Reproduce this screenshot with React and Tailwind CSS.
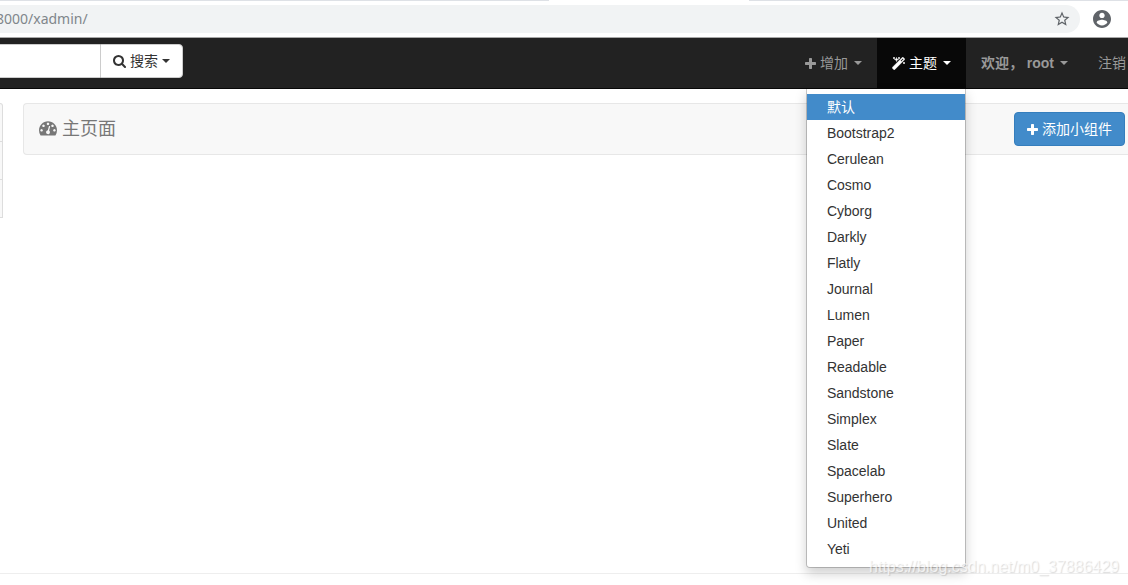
import { useState } from 'react'

const themes = [
    '默认', 'Bootstrap2', 'Cerulean', 'Cosmo', 'Cyborg', 'Darkly', 'Flatly', 'Journal', 'Lumen',
    'Paper', 'Readable', 'Sandstone', 'Simplex', 'Slate', 'Spacelab', 'Superhero', 'United', 'Yeti'
]

const iconPaths = {
    plus: 'M1600 736v192q0 40-28 68t-68 28h-416v416q0 40-28 68t-68 28h-192q-40 0-68-28t-28-68v-416h-416q-40 0-68-28t-28-68v-192q0-40 28-68t68-28h416v-416q0-40 28-68t68-28h192q40 0 68 28t28 68v416h416q40 0 68 28t28 68z',
    search: 'M1216 832q0-185-131.5-316.5t-316.5-131.5-316.5 131.5-131.5 316.5 131.5 316.5 316.5 131.5 316.5-131.5 131.5-316.5zm512 832q0 52-38 90t-90 38q-54 0-90-38l-343-342q-179 124-399 124-143 0-273.5-55.5t-225-150-150-225-55.5-273.5 55.5-273.5 150-225 225-150 273.5-55.5 273.5 55.5 225 150 150 225 55.5 273.5q0 220-124 399l343 343q37 37 37 90z',
    magic: 'M1254 581l293-293-107-107-293 293zm447-293q0 27-18 45l-1286 1286q-18 18-45 18t-45-18l-198-198q-18-18-18-45t18-45l1286-1286q18-18 45-18t45 18l198 198q18 18 18 45zm-1351-190l98 30-98 30-30 98-30-98-98-30 98-30 30-98zm350 162l196 60-196 60-60 196-60-196-196-60 196-60 60-196zm930 478l98 30-98 30-30 98-30-98-98-30 98-30 30-98zm-640-640l98 30-98 30-30 98-30-98-98-30 98-30 30-98z',
    dashboard: 'M384 1152q0-53-37.5-90.5t-90.5-37.5-90.5 37.5-37.5 90.5 37.5 90.5 90.5 37.5 90.5-37.5 37.5-90.5zm192-448q0-53-37.5-90.5t-90.5-37.5-90.5 37.5-37.5 90.5 37.5 90.5 90.5 37.5 90.5-37.5 37.5-90.5zm428 481l101-382q6-26-7.5-48.5t-38.5-29.5-48 6.5-30 39.5l-101 382q-60 5-107 43.5t-63 98.5q-20 77 20 146t117 89 146-20 89-117q16-60-6-117t-72-91zm660-33q0-53-37.5-90.5t-90.5-37.5-90.5 37.5-37.5 90.5 37.5 90.5 90.5 37.5 90.5-37.5 37.5-90.5zm-640-640q0-53-37.5-90.5t-90.5-37.5-90.5 37.5-37.5 90.5 37.5 90.5 90.5 37.5 90.5-37.5 37.5-90.5zm448 192q0-53-37.5-90.5t-90.5-37.5-90.5 37.5-37.5 90.5 37.5 90.5 90.5 37.5 90.5-37.5 37.5-90.5zm320 448q0 261-141 483-19 29-54 29h-1402q-35 0-54-29-141-221-141-483 0-182 71-348t191-286 286-191 348-71 348 71 286 191 191 286 71 348z'
}

const Icon = ({ name, viewBox = '0 0 1792 1792', className }) => (
    <svg viewBox={viewBox} className={className} fill="currentColor" aria-hidden="true">
        <path d={iconPaths[name]} />
    </svg>
)

const Caret = () => (
    <span className="border-x-4 border-t-4 border-x-transparent border-t-current" />
)

const BrowserBar = () => (
    <div className="border-b border-[#a8a8a8] bg-white">
        <div className="flex h-px">
            <div className="flex-1 bg-[#dee1e6]" />
            <div className="w-[200px]" />
            <div className="w-[379px] bg-[#dee1e6]" />
        </div>
        <div className="flex h-9 items-center">
            <div className="flex h-7 flex-1 items-center rounded-r-full bg-[#f1f3f4] pr-[9px]">
                <input
                    type="text"
                    aria-label="Address"
                    defaultValue="8000/xadmin/"
                    className="-ml-1 min-w-0 flex-1 bg-transparent font-['Noto_Sans',sans-serif] text-sm leading-5 text-[#80868b] outline-none"
                />
                <button aria-label="Bookmark">
                    <svg viewBox="0 0 24 24" className="h-[18px] w-[18px]" fill="#5f6368">
                        <path d="M22 9.24l-7.19-.62L12 2 9.19 8.63 2 9.24l5.46 4.73L5.82 21 12 17.27 18.18 21l-1.63-7.03L22 9.24zM12 15.4l-3.76 2.27 1-4.28-3.32-2.88 4.38-.38L12 6.1l1.71 4.04 4.38.38-3.32 2.88 1 4.28L12 15.4z" />
                    </svg>
                </button>
            </div>
            <button aria-label="Profile" className="mr-4 ml-3">
                <svg viewBox="2 2 20 20" className="h-5 w-5 p-px" fill="#5f6368">
                    <path d="M12 2C6.48 2 2 6.48 2 12s4.48 10 10 10 10-4.48 10-10S17.52 2 12 2zm0 3c1.66 0 3 1.34 3 3s-1.34 3-3 3-3-1.34-3-3 1.34-3 3-3zm0 14.2c-2.5 0-4.71-1.28-6-3.22.03-1.99 4-3.08 6-3.08 1.99 0 5.97 1.09 6 3.08-1.29 1.94-3.5 3.22-6 3.22z" />
                </svg>
            </button>
        </div>
    </div>
)

const ThemeMenu = ({ selected, onSelect }) => (
    <ul className="absolute top-full right-0 z-10 w-40 rounded-b border border-black/20 bg-white bg-clip-padding py-[5px] shadow-[0_6px_12px_rgba(0,0,0,0.18)]">
        {themes.map(theme => (
            <li key={theme}>
                <button
                    onClick={() => onSelect(theme)}
                    className={`block h-[26px] w-full px-5 text-left leading-[26px] ${theme === selected ? 'bg-[#428bca] text-white' : 'text-[#333] hover:bg-gray-100'}`}
                >
                    {theme}
                </button>
            </li>
        ))}
    </ul>
)

// label with an icon in front and a caret behind
const DropdownLabel = ({ children }) => (
    <span className="flex items-center gap-[6px]">
        <span className="flex items-center gap-1">{children}</span>
        <Caret />
    </span>
)

const Navbar = () => {
    const [menuOpen, setMenuOpen] = useState(true)
    const [selected, setSelected] = useState(themes[0])

    return (
        <nav className="flex h-[51px] justify-between border-b border-[#080808] bg-[#222] text-[#999]">
            <form className="mt-[6px] flex h-[34px]" onSubmit={e => e.preventDefault()}>
                <input type="text" aria-label="搜索" className="w-[100px] border-y border-[#ccc] bg-white px-3 text-[#555] outline-none" />
                <button className="flex items-center gap-1 rounded-r border border-[#ccc] bg-white px-3 text-[#333]">
                    <Icon name="search" viewBox="64 128 1664 1664" className="h-[13px] w-[13px]" />
                    搜索
                    <Caret />
                </button>
            </form>
            <div className="flex">
                <button className="px-[15px]">
                    <DropdownLabel>
                        <Icon name="plus" viewBox="192 128 1408 1408" className="h-[11px] w-[11px]" />
                        增加
                    </DropdownLabel>
                </button>
                <div className="relative flex">
                    <button
                        onClick={() => setMenuOpen(!menuOpen)}
                        className="bg-[#080808] px-[15px] text-white"
                    >
                        <DropdownLabel>
                            <svg viewBox="64 0 1664 1664" className="h-[13px] w-[13px]" fill="currentColor" stroke="currentColor" strokeWidth="70" aria-hidden="true">
                                <path d={iconPaths.magic} />
                            </svg>
                            主题
                        </DropdownLabel>
                    </button>
                    {menuOpen && <ThemeMenu selected={selected} onSelect={setSelected} />}
                </div>
                <button className="px-[15px] font-bold">
                    <DropdownLabel>欢迎， root</DropdownLabel>
                </button>
                <a href="#logout" className="flex items-center pr-[2px] pl-[15px]">注销</a>
            </div>
        </nav>
    )
}

const App = () => (
    <div className="relative flex min-h-screen flex-col overflow-hidden bg-white font-['Liberation_Sans','Noto_Sans_CJK_SC',sans-serif] text-sm text-[#333]">
        <BrowserBar />
        <Navbar />

        <main className="mt-[14px] flex flex-1 items-start gap-5">
            {/* Sidebar edge */}
            <div className="w-[3px] divide-y divide-[#ddd] rounded-tr border-y border-r border-[#ddd] bg-[#f8f8f8]">
                <div className="h-[38px]" />
                <div className="h-[38px]" />
                <div className="h-[37px]" />
            </div>

            <header className="flex h-[52px] flex-1 items-center justify-between rounded-l border-y border-l border-[#e7e7e7] bg-[#f8f8f8] pr-[3px] pl-[15px]">
                <h1 className="flex items-center gap-[5px] text-lg text-[#777]">
                    <Icon name="dashboard" viewBox="0 128 1792 1792" className="h-[18px] w-[18px]" />
                    主页面
                </h1>
                <button className="flex h-[34px] items-center gap-1 rounded border border-[#357ebd] bg-[#428bca] px-3 text-white">
                    <Icon name="plus" viewBox="192 128 1408 1408" className="h-[11px] w-[11px]" />
                    添加小组件
                </button>
            </header>
        </main>

        <footer className="h-3 border-t border-[#eee]" />

        <div className="absolute right-[9px] bottom-2 z-20 text-base leading-5 text-white/70 [text-shadow:1px_1px_1px_rgba(0,0,0,0.14)]">
            https://blog.csdn.net/m0_37886429
        </div>
    </div>
)

export default App
